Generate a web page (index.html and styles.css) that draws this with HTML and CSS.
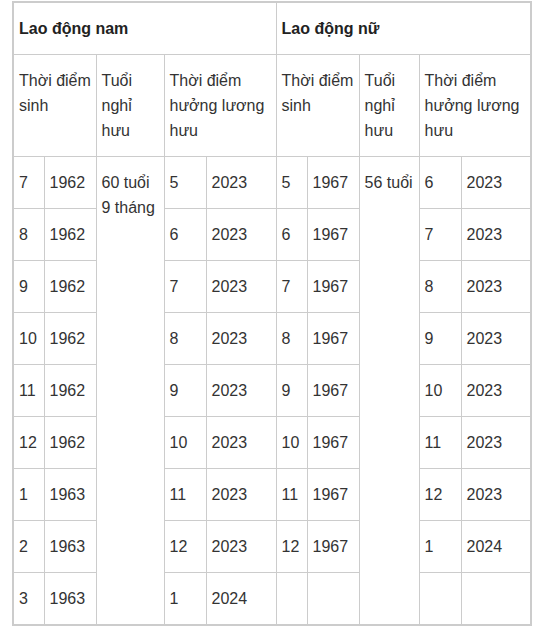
FILE: index.html
```html
<!DOCTYPE html>
<html lang="vi">
<head>
<meta charset="utf-8">
<title>Lao động</title>
<link rel="stylesheet" href="styles.css">
</head>
<body>
<table class="tbl">
  <colgroup>
    <col class="c1"><col class="c2"><col class="c3"><col class="c4"><col class="c5">
    <col class="c6"><col class="c7"><col class="c8"><col class="c9"><col class="c10">
  </colgroup>
  <tbody>
    <tr>
      <td colspan="5" class="head">Lao động nam</td>
      <td colspan="5" class="head">Lao động nữ</td>
    </tr>
    <tr>
      <td colspan="2" class="tight">Thời điểm sinh</td>
      <td>Tuổi nghỉ hưu</td>
      <td colspan="2">Thời điểm hưởng lương hưu</td>
      <td colspan="2" class="tight">Thời điểm sinh</td>
      <td>Tuổi nghỉ hưu</td>
      <td colspan="2">Thời điểm hưởng lương hưu</td>
    </tr>
    <tr>
      <td>7</td><td>1962</td><td rowspan="9">60 tuổi 9 tháng</td><td>5</td><td>2023</td>
      <td>5</td><td>1967</td><td rowspan="9" class="nowrap">56 tuổi</td><td>6</td><td>2023</td>
    </tr>
    <tr><td>8</td><td>1962</td><td>6</td><td>2023</td><td>6</td><td>1967</td><td>7</td><td>2023</td></tr>
    <tr><td>9</td><td>1962</td><td>7</td><td>2023</td><td>7</td><td>1967</td><td>8</td><td>2023</td></tr>
    <tr><td>10</td><td>1962</td><td>8</td><td>2023</td><td>8</td><td>1967</td><td>9</td><td>2023</td></tr>
    <tr><td>11</td><td>1962</td><td>9</td><td>2023</td><td>9</td><td>1967</td><td>10</td><td>2023</td></tr>
    <tr><td>12</td><td>1962</td><td>10</td><td>2023</td><td>10</td><td>1967</td><td>11</td><td>2023</td></tr>
    <tr><td>1</td><td>1963</td><td>11</td><td>2023</td><td>11</td><td>1967</td><td>12</td><td>2023</td></tr>
    <tr><td>2</td><td>1963</td><td>12</td><td>2023</td><td>12</td><td>1967</td><td>1</td><td>2024</td></tr>
    <tr><td>3</td><td>1963</td><td>1</td><td>2024</td><td></td><td></td><td></td><td></td></tr>
  </tbody>
</table>
</body>
</html>
```
FILE: styles.css
```css
html, body {
  margin: 0;
  padding: 0;
  background: #fff;
}
body {
  padding: 1px 0 0 12px;
  font-family: "Liberation Sans", Arial, sans-serif;
  font-size: 16px;
  color: #333;
}
.tbl {
  border-collapse: collapse;
  table-layout: fixed;
  width: 520px;
  border: 2px solid #ccc;
}
.tbl td {
  border: 1px solid #ccc;
  padding: 13px 5px;
  line-height: 25px;
  vertical-align: top;
  text-align: left;
}
.tbl td.head {
  font-weight: bold;
  color: #222;
}
.tbl td.nowrap {
  white-space: nowrap;
  padding-right: 0;
}
.tbl td.tight {
  padding-right: 0;
}
.c1 { width: 31px; }
.c2 { width: 52px; }
.c3 { width: 68px; }
.c4 { width: 42px; }
.c5 { width: 70px; }
.c6 { width: 31px; }
.c7 { width: 52px; }
.c8 { width: 60px; }
.c9 { width: 42px; }
.c10 { width: 70px; }
```
